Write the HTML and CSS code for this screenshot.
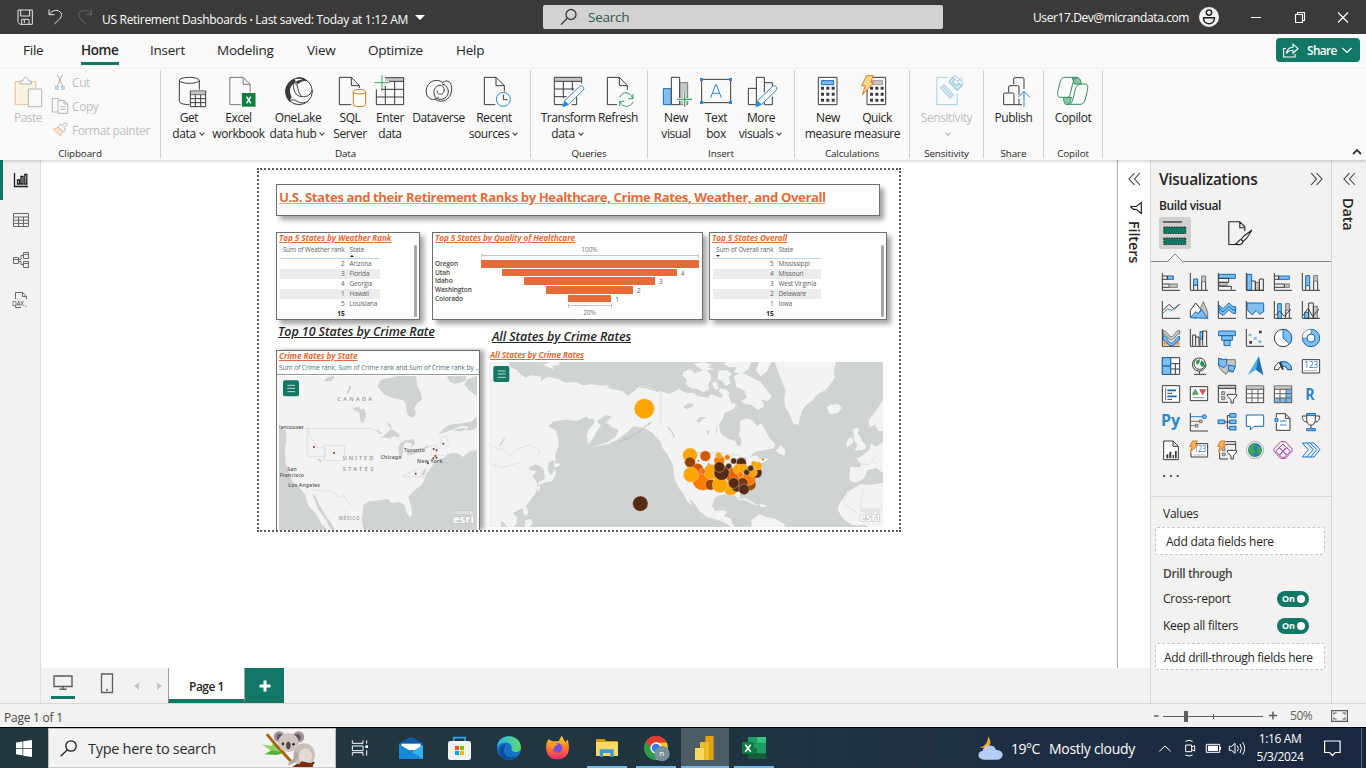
FILE: index.html
```html
<!DOCTYPE html>
<html lang="en">
<head>
<meta charset="utf-8">
<title>US Retirement Dashboards</title>
<link rel="stylesheet" href="styles.css">
</head>
<body>
<header class="titlebar">
  <svg class="tb-icons" viewBox="48 24 240 60"><g class="ln" stroke="#e8e6e4"><path d="M54 33h43v43H60l-6-6zM62 33v18h27V33M65 76V61h22v15M73 62v10"/></g><path class="ln" stroke="#e8e6e4" d="M147 31v16h16M148 46c8-14 28-16 35-4 6 11-4 18-20 33"/><path class="ln" stroke="#6b6967" d="M274 31v16h-16M273 46c-8-14-28-16-35-4-6 11 4 18 20 33"/></svg>
  <div class="doc-name">US Retirement Dashboards <small>•</small> Last saved: Today at 1:12 AM</div>
  <i class="doc-caret"></i>
  <div class="search"><svg width="18" height="18" viewBox="0 0 18 18" fill="none" stroke="#3b3a39" stroke-width="1.3"><circle cx="11" cy="6.5" r="5"/><path d="M7.3 10.3L1 16.6"/></svg><span>Search</span></div>
  <div class="account">User17.Dev@micrandata.com</div>
  <svg class="avatar" viewBox="0 0 20 20"><circle cx="10" cy="10" r="10" fill="#f3f2f1"/><g fill="none" stroke="#1b1a19" stroke-width="1.4"><circle cx="10" cy="5.6" r="2.7"/><path d="M4.5 10.7h11c0 8-11 8-11 0z"/></g></svg>
  <svg class="winbtns" viewBox="0 0 100 20" fill="none" stroke="#fff" stroke-width="1.1"><path d="M0 10.500h10M87 5.500l10 10M97 5.500l-10 10M44.500 7.500h7v8h-7zM46.500 7v-1.500h7v8H52"/></svg>
</header>

<nav class="menu">
  <div class="tabs"><span>File</span><span class="on">Home</span><span>Insert</span><span>Modeling</span><span>View</span><span>Optimize</span><span>Help</span></div>
  <button class="share"><svg width="16" height="15" viewBox="0 0 16 15" fill="none" stroke="#fff" stroke-width="1.1"><path d="M3 5.500H.6v8.500h11.500v-3M3.500 10.500C4 6.500 6 4.500 10 4.300V1.200l5 4.500-5 4.500V7.300c-3 0-5 .8-6.500 3.200z"/></svg><span>Share</span><svg width="10" height="7" viewBox="0 0 10 7" fill="none" stroke="#fff" stroke-width="1.2"><path d="M.5 1l4.500 4.500L9.500 1"/></svg></button>
</nav>

<section class="ribbon">
  <div class="group g-clip">
    <div class="clip-row">
      <div class="paste"><svg viewBox="42 228 96 96"><path d="M52 245h61v20M52 245v68h38" fill="none" stroke="#f0c9a0" stroke-width="4"/><path d="M56 249h53v18H90v42H56z" fill="#faf3e0"/><path class="ln" fill="#fafafa" stroke="#b5b3b1" d="M66 252v-9h8c1-14 17-14 18 0h8v9zM91 267h40v53H91z"/></svg><span>Paste</span></div>
      <div class="clip-list">
        <div><svg viewBox="156 222 48 48"><path class="ln" stroke="#b5b3b1" d="M172 224l15 34M187 224l-15 34"/><path class="ln" stroke="#9ac6e4" fill="#d6e9f6" d="M166 259h8v9h-8zM185 259h8v9h-8z"/></svg>Cut</div>
        <div><svg viewBox="156 294 48 48"><path class="ln" stroke="#b5b3b1" d="M172 336h-15v-40h20l6 6M174 302h18l11 10v28h-29zM192 302v10h11M181 320h15M181 328h15"/></svg>Copy</div>
        <div><svg viewBox="156 366 48 48"><path class="ln" stroke="#edc7a2" fill="#f8e3cd" d="M158 388l23 20 8-14-12-13z"/><path class="ln" stroke="#b5b3b1" fill="#fafafa" d="M174 380l16 16 7-7-6-6 11-10-5-5-12 9-5-4z"/></svg>Format painter</div>
      </div>
    </div>
    <div class="glabel">Clipboard</div>
  </div>

  <div class="group g-data">
    <div class="btns">
      <div class="rb"><svg viewBox="516 228 96 96"><g class="dk"><ellipse cx="565" cy="241" rx="30" ry="9"/><path d="M535 241v63c0 6 14 10 30 10M595 241v28"/></g><path fill="#fff" class="dk" d="M568 273h46v47h-46zM568 284h46M568 296h46M568 308h46M583 284v36M599 284v36"/><path fill="#c8c6c4" d="M570 275h42v8h-42z"/></svg><span>Get<br>data<i class="cv"></i></span></div>
      <div class="rb"><svg viewBox="664.500 228 96 96"><path class="ln" stroke="#797775" d="M718 314h-33v-82h40l21 21v24M725 232v21h21"/><path fill="#107c41" d="M721 279h41v41h-41z"/><path d="M735 290l13 20M748 290l-13 20" stroke="#fff" stroke-width="4"/></svg><span>Excel<br>workbook</span></div>
      <div class="rb"><svg viewBox="843 228 96 96"><circle class="dk" cx="894" cy="274" r="40"/><path fill="#3b3a39" d="M880 236c15-9 33-4 40 8-14-4-24 3-31 10M878 237c-28 14-33 45-13 68l7-14c-10-18-4-37 10-42 3-8 20-11 24-7-8-8-20-10-28-5z"/><path class="dk" d="M878 246c-4 22 5 43 24 44 18 2 29-8 31-20M866 304c18-16 24 14 50 2M878 246c17 11 9 27 24 44"/></svg><span>OneLake<br>data hub<i class="cv"></i></span></div>
      <div class="rb"><svg viewBox="999 228 96 96"><path class="dk" d="M1051 314h-36v-82h36l24 25v7M1051 232v25h24"/><g class="ln" stroke="#d8751d" fill="#fff"><path d="M1057 275v38c0 9 37 9 37 0v-38"/><ellipse cx="1075.500" cy="275" rx="18.500" ry="7"/></g></svg><span>SQL<br>Server</span></div>
      <div class="rb"><svg viewBox="1119 228 96 96"><path fill="#c8c6c4" d="M1152 234h56v10h-56z"/><path class="dk" d="M1152 233h56v81h-82v-46M1164 244h44M1140 268h68M1126 291h82M1153 258v56M1181 244v70"/><path class="ln" stroke="#37a660" d="M1143 226v46M1120 248h46"/></svg><span>Enter<br>data</span></div>
      <div class="rb"><svg viewBox="-25.500 228 96 96"><path class="dk" d="M33 247c-20-14-46-2-49 24-2 24 22 36 38 20M10 298c22 14 47 0 50-25 2-18-4-30-15-30-4 0-8 2-12 4M32 252c18 5 24 24 13 38-12 14-38 10-38-12 0-26 30-30 31-8 0 16-22 18-21 2"/></svg><span>Dataverse</span></div>
      <div class="rb"><svg viewBox="141 228 96 96"><path class="dk" d="M193 314h-33v-82h35l25 25v17M195 232v25h25"/><circle cx="217" cy="298" r="21" class="ln" fill="#fff" stroke="#2b88d8"/><path class="dk" d="M217 284v15h12"/></svg><span>Recent<br>sources<i class="cv"></i></span></div>
    </div>
    <div class="glabel">Data</div>
  </div>

  <div class="group g-query">
    <div class="btns">
      <div class="rb"><svg viewBox="363 228 96 96"><path fill="#c8c6c4" d="M370 233h82v10h-82z"/><path class="dk" d="M452 250v-18h-82v82h26M370 244h82M370 267h60M370 290h37M397 244v50M424 244v28M437 291v23h-15"/><path class="pen" d="M401 302l45-43c8-4 16 3 11 11l-44 43-17 7z"/><path fill="#2b88d8" d="M401 302l12 11-17 8z"/></svg><span>Transform<br>data<i class="cv"></i></span></div>
      <div class="rb"><svg viewBox="513 228 96 96"><path class="dk" d="M558 314h-29v-82h36l24 25v12M565 232v25h24"/><path class="ln" stroke="#3d9a5f" d="M606 282v14h-14M566 318v-14h14M566 292c7-19 32-19 39 3M606 306c-7 17-32 18-39-1"/></svg><span>Refresh</span></div>
    </div>
    <div class="glabel">Queries</div>
  </div>

  <div class="group g-insert">
    <div class="btns">
      <div class="rb"><svg viewBox="690 228 96 96"><path class="bl" d="M700 266h24v48h-24z"/><path fill="#c8c6c4" stroke="#797775" stroke-width="3" d="M749 248h24v66h-24z"/><path class="dk" fill="#fff" d="M724 232h25v82h-25z"/><path d="M764 274v47M741 298h45" stroke="#fafafa" stroke-width="8"/><path d="M764 274v47M741 298h45" stroke="#37a660" stroke-width="3.500"/></svg><span>New<br>visual</span></div>
      <div class="rb"><svg viewBox="810 228 96 96"><path class="dk" d="M815 238h87v70h-87z"/><path fill="#2b88d8" d="M810 234h9v9h-9zM897 234h9v9h-9zM810 303h9v9h-9zM897 303h9v9h-9z"/><path class="ln" stroke="#2b88d8" d="M842 293l15-39h2l15 39M847 280h22"/></svg><span>Text<br>box</span></div>
      <div class="rb"><svg viewBox="945 228 96 96"><path class="dk" d="M979 265h-24v49h24v-82h24v45M1003 248h24v11M1003 303v11h24v-24"/><path class="pen" d="M983 302l45-43c8-4 16 3 11 11l-44 43-17 7z"/><path fill="#2b88d8" d="M983 302l12 11-17 8z"/></svg><span>More<br>visuals<i class="cv"></i></span></div>
    </div>
    <div class="glabel">Insert</div>
  </div>

  <div class="group g-calc">
    <div class="btns">
      <div class="rb"><svg viewBox="1146 228 96 96"><path class="dk" fill="#fff" d="M1165 232h56v82h-56z"/><path class="bl" d="M1174 242h37v12h-37z"/><path stroke="#3b3a39" stroke-width="9" stroke-dasharray="9 7" d="M1173 265h41M1173 283h41M1173 301h41"/></svg><span>New<br>measure</span></div>
      <div class="rb"><svg viewBox="1293 228 96 96"><path class="dk" fill="#fff" d="M1311 232h56v82h-56z"/><path fill="#c8c6c4" stroke="#797775" stroke-width="2" d="M1325 242h33v12h-33z"/><path stroke="#3b3a39" stroke-width="9" stroke-dasharray="9 7" d="M1320 265h41M1320 283h41M1320 301h41"/><path class="ln" fill="#fbd98b" stroke="#e07b22" d="M1310 227h20l-8 20h9l-34 37 9-27h-11z"/></svg><span>Quick<br>measure</span></div>
    </div>
    <div class="glabel">Calculations</div>
  </div>

  <div class="group g-sens">
    <div class="btns">
      <div class="rb off"><svg viewBox="91.500 228 96 96"><g class="ln" stroke="#a3cde6"><path d="M143 232h-34v82h61v-34"/><path fill="#d5e8f5" d="M119 263l12-9 29 31-12 10zM128 261l24 26"/><path fill="#d5e8f5" stroke-width="4" d="M146 246l10-14 6 6-5 9 10 9 9-6 8 8-14 13z"/><path d="M156 232l8-5 24 22-4 9M164 238l8 7 8-11 8 7"/></g></svg><span>Sensitivity<br><i class="cv"></i></span></div>
    </div>
    <div class="glabel">Sensitivity</div>
  </div>
  <div class="group g-share">
    <div class="btns">
      <div class="rb"><svg viewBox="290 228 96 96"><path class="dk" d="M337 253v-16q0-4 4-4h23q4 0 4 4v30M322 277v-16q0-4 4-4h23q4 0 4 4v24M307 314v-31q0-4 4-4h23q4 0 4 4v31zM338 314h24M353 296v18"/><path class="ln" stroke="#2b88d8" d="M368 320v-45M350 292l18-18 18 18"/></svg><span>Publish</span></div>
    </div>
    <div class="glabel">Share</div>
  </div>
  <div class="group g-cop">
    <div class="btns">
      <div class="rb"><svg viewBox="471 228 96 96"><g class="ln" stroke="#2f8f5b"><path fill="#8cc5a2" d="M517 234h15c7 0 9 4 13 18h-22zM490 292h24l-3 12c-3 9-5 10-11 10-8-1-8-10-10-22z"/><path d="M490 292h-12c-7-3-6-12-3-24l6-24c3-9 7-12 16-12h37M545 252h13c7 3 6 12 3 24l-6 24c-3 9-7 13-16 13h-37M526 235c-6 5-8 18-12 32-4 17-4 25-12 25M511 312c7-6 8-16 12-32 4-18 6-27 22-28"/></g></svg><span>Copilot</span></div>
    </div>
    <div class="glabel">Copilot</div>
  </div>
  <svg class="collapse" width="10" height="7" viewBox="0 0 10 7" fill="none" stroke="#3b3a39" stroke-width="1.900"><path d="M1 6l4-4 4 4"/></svg>
</section>

<main class="work">
  <aside class="rail">
    <div class="on"><svg viewBox="0 0 18 18"><path class="r1" stroke="#1b1a19" stroke-width="1.300" d="M2.500 2v13.500H16M5.500 9h2v4h-2zM9 5.500h2V13H9zM12.800 3.500h2V13h-2z"/></svg></div>
    <div><svg viewBox="0 0 18 18"><path class="r1" d="M1.500 2.500h15v13h-15zM1.500 6h15M1.500 9.200h15M1.500 12.400h15M6.500 6v9.500M11.500 6v9.500"/></svg></div>
    <div><svg viewBox="0 0 18 18"><path class="r1" d="M1.500 6.500h5v6h-5zM1.500 8.500h5M11.500 1.500h5v6h-5zM11.500 3.500h5M11.500 10.500h5v6h-5zM11.500 12.500h5M6.500 8.500H9v-4h2.500M6.500 10.500H9v3h2.500"/></svg></div>
    <div><svg viewBox="0 0 18 18"><path class="r1" d="M3.500 8V1.500h7l4 4V8M10.500 1.500v4h4M3.500 15v1.500H9M13 14.500l1.500 1.500"/><text x="0" y="14.500" font-size="6.500" fill="#484644">DAX</text></svg></div>
  </aside>

  <div class="center">
    <div class="upper">
      <div class="stage">
        <div class="page">
          <div class="visual v-title">U.S. States and their Retirement Ranks by Healthcare, Crime Rates, Weather, and Overall</div>

          <div class="visual v-weather">
            <h3>Top 5 States by Weather Rank</h3>
            <div class="tbl"><div class="th"><span>Sum of Weather rank</span><span>State<i class="up"></i></span></div>
              <div><span>2</span><span>Arizona</span></div><div><span>3</span><span>Florida</span></div><div><span>4</span><span>Georgia</span></div><div><span>1</span><span>Hawaii</span></div><div><span>5</span><span>Louisiana</span></div><div class="sum"><span>15</span><span></span></div></div>
            <i class="scroll"></i>
          </div>

          <div class="visual v-health">
            <h3>Top 5 States by Quality of Healthcare</h3>
            <div class="funnel">
              <div class="cap">100%</div>
              <div class="scale" style="width:218px"></div>
              <div class="f"><b>Oregon</b><span><i style="width:100%"></i></span></div>
              <div class="f"><b>Utah</b><span><i style="width:80%"></i><em>4</em></span></div>
              <div class="f"><b>Idaho</b><span><i style="width:60%"></i><em>3</em></span></div>
              <div class="f"><b>Washington</b><span><i style="width:40%"></i><em>2</em></span></div>
              <div class="f"><b>Colorado</b><span><i style="width:20%"></i><em>1</em></span></div>
              <div class="scale low" style="width:44px"></div>
              <div class="cap">20%</div>
            </div>
          </div>

          <div class="visual v-overall">
            <h3>Top 5 States Overall</h3>
            <div class="tbl"><div class="th"><span>Sum of Overall rank<i class="down"></i></span><span>State</span></div>
              <div><span>5</span><span>Mississippi</span></div><div><span>4</span><span>Missouri</span></div><div><span>3</span><span>West Virginia</span></div><div><span>2</span><span>Delaware</span></div><div><span>1</span><span>Iowa</span></div><div class="sum"><span>15</span><span></span></div></div>
            <i class="scroll"></i>
          </div>

          <h2 class="h-top">Top 10 States by Crime Rate</h2>
          <h2 class="h-all">All States by Crime Rates</h2>

          <div class="visual v-crime">
            <h3>Crime Rates by State</h3>
            <p>Sum of Crime rank, Sum of Crime rank and Sum of Crime rank by ...</p>
            <svg class="map1" viewBox="72 168 594 462">
              <path fill="#f3f3f3" d="M72 168h594v462H72z"/>
              <g fill="#cfd3d4">
                <path d="M72 325l20 5 3 22-5 40 2 36 7 24 13 32 25 22 15 20 8 26 20 23 15 29 22 26H72z"/>
                <path fill="#f3f3f3" d="M148 516l20 3 12 30 22 40 20 25-2 14-18-12-20-36-20-20z"/>
                <path d="M172 522l9 5 12 28 20 32 16 22 10 21h-12l-14-30-24-32z"/>
                <path d="M326 630l-6-30 6-46 16-10 34-3 22-4 12 12 24-2 14 8 8 24 10 14 6-13-5-28-7-20 16-19 26-20 7-18 6-16 16-20 9-17 26-8 12-12 16-4 18 3 12 10 18-16 24-6v-8h10v273z"/>
                <path d="M425 168c-15 10-38 2-50 15l-8 16 20 24 32 13 26 4 8 14 2 22 6 13 14 4 8-12-5-16 10-18 14-8-5-22-11-20-3-29z"/>
                <path d="M576 168l8 18 14 5 18-2 18-10-2-11zM638 178l28-10v60l-26-18-12-18zM666 290l-18 15-26 5-40 4-18 14-14 16 34-12 34-14 22 2-6 12 24-4 8-8zM590 332l20-6 26-2-12 10zM206 184l12-12 20-4 2 4-14 12zM275 218l5-10 3-12 6 3-5 16-8 8zM292 264l22-3 4 10 8-6 8 18-8 25-9-3-4-28-6-2-10-5zM395 304l11 8 4 12-7-2zM362 330l12 3 8 8-8 2zM371 352l12-2 16-15 10-9 14 9 10 8-2 10-16-4-10 7-14-3zM432 398l-2-18 6-10 16-10 4 4-10 10-2 22-3 15-8 3zM447 364l12-4 16-3 5 12-6 10-7 3 5-11-10-2zM457 394l14-3 18-2 7 6-26 9-14 2zM486 388l22-6 16-8-4 8-16 9zM188 418l6-2 8 8-5 4z"/>
                <path d="M498 466l8-16 8-6-4 20z"/>
              </g>
              <g fill="none" stroke="#cfcfcf" stroke-width="1.500"><path d="M100 326h244l30 8M157 325v84h54M157 325l10 25 12 20 10 14h22v26M208 376h60v46h-60zM168 508l30 5 30-2 22 20 16-4 14 22 14 8M442 468l20-9 18-8 14-8 12 10M442 470h66M528 376h16v44M555 376l6-25 14-4 5 26-16 16M528 376v30h38"/></g>
              <g fill="#7a3d1a"><circle cx="177" cy="381" r="3"/><circle cx="237" cy="399" r="3"/><circle cx="482" cy="461" r="3"/><circle cx="536" cy="387" r="3"/><circle cx="545" cy="391" r="3"/><circle cx="565" cy="371" r="3"/><circle cx="541" cy="408" r="3"/><circle cx="535" cy="415" r="3"/><circle cx="545" cy="413" r="3"/><circle cx="519" cy="430" r="3"/></g>
              <g class="lb"><g fill="#8d8f90"><text x="247" y="244" font-size="17" textLength="104">CANADA</text><text x="263" y="421" font-size="17" textLength="92">UNITED</text><text x="263" y="452" font-size="17" textLength="92">STATES</text><text x="251" y="600" font-size="13" textLength="62">MÉXICO</text></g>
              <g fill="#484848"><text x="66" y="326" font-size="15.500" textLength="80">Vancouver</text><text x="377" y="416" font-size="15.500" textLength="62">Chicago</text><text x="447" y="396" font-size="15.500" textLength="63">Toronto</text><text x="486" y="429" font-size="15.500" textLength="76">New York</text><text x="97" y="452" font-size="15.500" textLength="28">San</text><text x="74" y="471" font-size="15.500" textLength="73">Francisco</text><text x="100" y="500" font-size="15.500" textLength="94">Los Angeles</text></g></g>
              <g class="esri"><text class="pw" x="596" y="582" font-size="8" textLength="60">POWERED BY</text><text x="593" y="608" font-size="30" textLength="64" lengthAdjust="spacingAndGlyphs">esri</text></g>
              <rect x="84" y="181" width="48" height="48" rx="6" fill="#117865"/><path d="M97 196h23M97 205h23M97 215h23" stroke="#fff" stroke-width="2.200"/>
            </svg>
          </div>

          <div class="visual v-all">
            <h3>All States by Crime Rates</h3>
            <svg class="map2" viewBox="27 66 1182 495">
              <path fill="#cfd3d4" d="M27 66h1182v495H27z"/>
              <g fill="#f3f3f3">
                <path d="M27 66h60l3 15 20 8 12 14 14 10 20-7 28 4-3 14 22-14 30 6 24 12 34-2 16 10 26-3 38 4 20 9 34 7 36 26 16 18-12 10-26-4-26 3-4 20-18 3-12-4-14 8-14 10 12 14-16 22-9 18-13 14-5-25 8-20 14-16 2-12-18-1-6-8-30 14-32-4-38 5-14 15 22 13 7 25 1 22-10 25-10 19-10 6-2 20 8 18-9 13-9-5-2-25-7-10-18-7-22 10 8 8 18 3-14 14 15 22-3 25-14 20-16 23-24 13-16 8 12 13-2 20-20 20-14-22-12-6v25H27z"/>
                <path d="M213 302l8 12 3 30 4 18-8 2-8-34zM222 366l12 6 8-2-7 10-12 2zM225 384l3 18-10 20-28 6-12 8-6-6 22-14 22-12zM174 436l6 5-4 14-5-9zM126 468l6 2-4 20-6-6zM128 502l12-2 4 16-4 12-10-8zM136 540l18-4 4 16-12 9h-12zM53 498l9-4 4 8-8 6zM190 74l20-8h30l-4 10-20 2 6 10-12-4zM370 137l12-3 6 5-10 3z"/>
                <path d="M430 188l14-20 22-18 14-14 34 8 28 10 26 8 28-14 25 12 18-2 14 10 30 5 12-10 28 11 10-14 14 8 6 20 16 6-10 14-24 10-8 20-10 16 6 28 22 14 22 8 4 14 12-2 2-16-9-16 5-18-1-22 20-9 18 8 14 16 12-10 12 22 12 22 18 20-4 12-24 4-32 6-18 16 22-5 8 10 14-1 16 2-26 14-10-4-12 12-2 15-6 11-10 24-14 22-10 14 4 20-10-12-12-10-40 2-16 10-8 22 10 16 22-2 12 4-8 14 20 6 6 20 14 12 24-2-12 8-20-4-24-18-28-12-30-8-24-18-14-22-15-16 5 20-12-10-8-18-18-24-14-30-2-34-16-34-16-20-8-22-22-24-24-14-34-6-18 18-24 18-30 16-34 8-26 4 50-14 28-18 10-22-22-8-14-14 14-16-12-8 12-8z"/>
                <path d="M610 96l20-8 14 12 30-10 18 12 2 16-10 14 4 16-18 8-22-10-18-2-14-14 6-10-14-12zM640 72l30-6 25 8-12 8 20 4-30 8-14-10zM730 70l10-4h74l-8 22-24 14-20-6 8-14-26-2zM716 92l24-2 14 12-8 10 6 18-14 8-12-16-14-4zM762 108l24-10 28 14 28 14 18 24 16 20-12 14-20-6 10 20-20 12-20-16-18-2-14-8 18-10-6-22-24-10zM695 128l14-2 8 20-12 4zM836 66h38l-14 30-18 12-14-16zM720 145l18 3 12 14-20 3-14-10z"/>
                <path d="M884 66h184l-7 26 4 20-12 18-16 20-24 12-14 18-20 14-14 20-10 41-16-5-14-36-10-14-2-28 4-20-14-34z"/>
                <path d="M1040 202l12-8 22-2 12 12-14 15-22 4zM888 332l14-17 14 16-2 18-14-7zM776 478l20-4 24 14 18 9-18-3-22-12zM838 492l18 2 4 8-20-2zM815 540l23-17 22 8 26 6 26 14 3 10H814zM1120 268l16-6-2 18 12 22 12 16-2 10-32 6 8-18-10-16zM1106 296l10-6 4 16-18 16-4-10z"/>
                <path d="M1209 180l-13 20-17 24-14 16 4 22 16-8 10 20 14-2v34l-22 14-14-10-4 18-26 22-14 6 14 16-2 10-30-2-3 24 2 18 18 6 22-12 14-26 24-6 21 15zM1209 428l-36 6-32-2-20 14-18 8-12 20-14 20-4 14 10 20 14 16 22 12h34l14 5h42z"/>
              </g>
              <path fill="none" stroke="#dadcdc" stroke-width="2" d="M542 154v96M27 316l40 12 24 20 22-22 38-12 30 20-12 20M27 370l40 12 60-16M608 337h110l60 10M1110 452l-20 36 40 30M1150 445l-10 50 20 30 49-20M1130 370l40 4 20-30"/>
              <g fill="#cfd3d4"><path d="M610 200l16-10 18 2-8 8-16 8zM648 242l12-12 20 2-14 8-10 8zM680 270l10 2-8 14zM762 358l20-8 20 4-8 10zM55 318l20-28 2 2-14 24zM707 255l5 20-4 6z"/></g>
              <path fill="none" stroke="#b5b9ba" stroke-width="4" stroke-dasharray="3 2" d="M470 138l30 6 38 10M515 246l-18 12-16 16-32 18-34 14M563 260l12 14 8 18"/>
              <g stroke="#e8e0d8" stroke-width="1.200">
                <g fill="#ff7a00"><circle cx="668" cy="420" r="31"/><circle cx="718" cy="362" r="16"/><circle cx="742" cy="352" r="8"/></g>
                <g fill="#9c4600"><circle cx="652" cy="388" r="18" fill="#d05800"/><circle cx="692" cy="434" r="16"/><circle cx="676" cy="348" r="16" fill="#d05800"/><circle cx="808" cy="432" r="20"/></g>
                <g fill="#ffa500"><circle cx="630" cy="346" r="22"/></g><circle cx="630" cy="367" r="16" fill="#944200"/>
                <g fill="#ffa500"><circle cx="633" cy="404" r="23"/><circle cx="694" cy="396" r="23"/><circle cx="716" cy="346" r="9"/><circle cx="752" cy="444" r="22"/><circle cx="720" cy="435" r="23"/></g>
                <circle cx="667" cy="394" r="9" fill="#f56a1c"/>
                <circle cx="764" cy="408" r="26" fill="#e66000"/><circle cx="807" cy="416" r="20" fill="#ff7a00"/>
                <g fill="#552b13"><circle cx="725" cy="398" r="23"/><circle cx="718" cy="381" r="16"/><circle cx="784" cy="368" r="15"/><circle cx="761" cy="363" r="9"/><circle cx="746" cy="379" r="9"/><circle cx="830" cy="398" r="16"/><circle cx="772" cy="438" r="18"/><circle cx="788" cy="429" r="16" fill="#743710"/><circle cx="761" cy="429" r="16"/><circle cx="792" cy="448" r="16"/></g>
                <g fill="#ffa500"><circle cx="775" cy="388" r="16"/><circle cx="790" cy="386" r="14"/><circle cx="834" cy="378" r="12"/><circle cx="822" cy="372" r="9"/><circle cx="819" cy="398" r="13"/></g>
                <circle cx="800" cy="397" r="9" fill="#552b13"/><circle cx="812" cy="385" r="9" fill="#552b13"/><circle cx="781" cy="404" r="9" fill="#ff7a00"/><circle cx="849" cy="358" r="3.500" fill="#d05800"/><circle cx="655" cy="363" r="3" fill="#d05800"/><circle cx="686" cy="372" r="2.500" fill="#552b13"/>
                <circle cx="493" cy="206" r="30" fill="#ffa500"/><circle cx="481" cy="491" r="23" fill="#552b13"/>
              </g>
              <g class="esri"><text class="pw" x="1140" y="517" font-size="8" textLength="58">POWERED BY</text><text x="1138" y="543" font-size="30" textLength="62" lengthAdjust="spacingAndGlyphs">esri</text></g>
              <rect x="40" y="78" width="48" height="48" rx="6" fill="#117865"/><path d="M53 93h24M53 102h24M53 112h24" stroke="#fff" stroke-width="2.200"/>
            </svg>
          </div>
        </div>
      </div>
      <aside class="filters">
        <svg width="13" height="14" viewBox="0 0 13 14" class="chev"><path d="M6.500 1L1 7l5.500 6M12 1L6.500 7 12 13"/></svg>
        <svg width="12" height="12" viewBox="0 0 12 12" class="fun"><path d="M11.300 .5v11L6.300 7.300H3.500L.8 5V4.500h5.500z"/></svg>
        <span>Filters</span>
      </aside>
    </div>
    <div class="pagetabs">
      <div class="dev on"><svg width="20" height="16" viewBox="0 0 20 16" fill="none" stroke="#605e5c" stroke-width="1.400"><path d="M1 1h18v10.500H1zM10 11.500V14M6.500 14.300h7"/></svg></div>
      <div class="dev ph"><svg width="14" height="21" viewBox="0 0 14 21" fill="none" stroke="#605e5c" stroke-width="1.300"><path d="M1.500 1h11v18.500h-11zM6 17h2"/></svg></div>
      <i class="pl"></i><i class="pr"></i>
      <div class="ptab">Page 1</div>
      <div class="padd"><svg width="12" height="12" viewBox="0 0 12 12"><path d="M6 .5v11M.5 6h11" stroke="#fff" stroke-width="3"/></svg></div>
    </div>
  </div>

  <aside class="viz">
    <div class="vhead"><h1>Visualizations</h1><svg width="13" height="14" viewBox="0 0 13 14" class="chev"><path d="M1 1l5.500 6L1 13M6.500 1L12 7l-5.500 6"/></svg></div>
    <div class="vsub">Build visual</div>
    <div class="vtabs">
      <div class="vt on"><svg width="24" height="25" viewBox="0 0 24 25"><path d="M0 1h19" stroke="#252423" stroke-width="1.200"/><g fill="#117865" stroke="#252423" stroke-width="1" stroke-dasharray="1.500 1"><path d="M.8 6h22v6.500h-22zM.8 17h22v6.500h-22z"/></g></svg></div>
      <div class="vt"><svg width="25" height="25" viewBox="0 0 25 25" fill="none" stroke="#252423" stroke-width="1.100"><path d="M8 23.500H.8V.8h11l5 5V10M11.800.8v6h5M24 9l-8 6-3 3.500 2 2 3.500-3zM13 18.500c-3 0-2 4-6 4.500 3 1 8 1 8-2.500"/></svg></div>
    </div>
    <svg class="vline" viewBox="0 0 180 9"><path d="M0 8.500h16.500l7.500-7.500 7.500 7.500H180" fill="none" stroke="#8a8886" stroke-width="1"/></svg>
    <div class="icons">
      <svg viewBox="0 0 54 54"><path class="bl" d="M16 9h18v10H16z"/><path class="dk" d="M1 0v52h53M2 9h14v10H2M2 33h20v10H2"/><path class="gy" d="M22 33h24v10H22z"/></svg>
      <svg viewBox="0 0 54 54"><path class="dk" d="M1 0v52h53M11 36h12v16M11 52V36M35 26v26M47 26v26"/><path class="bl" d="M11 18h12v18H11z"/><path class="gy" d="M35 9h12v17H35z"/></svg>
      <svg viewBox="0 0 54 54"><path class="bl" d="M2 4h50v12H2z"/><path class="gy" d="M3 28h24v10H3z"/><path class="dk" d="M1 0v52h53M2 16h30v12H2M2 40h38v10"/></svg>
      <svg viewBox="0 0 54 54"><path class="bl" d="M3 4h14v48H3z"/><path class="gy" d="M28 28h12v24H28z"/><path class="dk" d="M1 0v52h53M17 24h11v28M40 18h12v34H40z"/></svg>
      <svg viewBox="0 0 54 54"><path class="bl" d="M14 9h32v10H14z"/><path class="gy" d="M31 33h15v10H31z"/><path class="dk" d="M1 0v52h53M2 9h12v10H2M2 33h29v10H2"/></svg>
      <svg viewBox="0 0 54 54"><path class="dk" d="M1 0v52h53M11 38v14M23 38v14M35 24v28M47 24v28"/><path class="bl" d="M11 8h12v30H11z"/><path class="gy" d="M35 8h12v16H35z"/></svg>

      <svg viewBox="0 0 54 54"><path class="dk" d="M1 0v52h53M3 28l18-18 16 15 16-16"/><path class="ln" stroke="#2b88d8" d="M3 36l14-12 12 4 20-16"/></svg>
      <svg viewBox="0 0 54 54"><path class="gy" d="M24 40L40 2l13 32v18z"/><path class="dk" fill="#fff" d="M1 28L17 6l16 20-16 26L1 46z"/><path class="bl" d="M1 50l16-18 8 6 10-12 18 26z"/></svg>
      <svg viewBox="0 0 54 54"><path class="bl" d="M3 12l12 11L33 6l12 11h8v20h-9L33 26 15 44 3 34z"/><path class="ln" stroke="#0f6cbd" d="M3 22l12 11 18-17 12 11h8"/><path class="dk" d="M1 0v52h53"/></svg>
      <svg viewBox="0 0 54 54"><path class="bl" d="M3 6h50v26l-12 8-10-12-12 14L3 26z"/><path class="dk" d="M1 0v52h53"/></svg>
      <svg viewBox="0 0 54 54"><path class="bl" d="M11 8h11v44H11z"/><path class="gy" d="M35 8h11v20H35z"/><path class="dk" d="M1 0v52h53M35 28v24M46 28v24M3 44l14-14 14 16 20-22"/></svg>
      <svg viewBox="0 0 54 54"><path class="bl" d="M8 34h12v18H8z"/><path class="gy" d="M34 16h12v36H34z"/><path class="dk" d="M1 0v52h53M20 6h14v46H20zM3 44l15-22 14 24 19-22"/></svg>

      <svg viewBox="0 0 54 54"><path fill="#ef9b3d" d="M4 33h14v14H4zM36 33h16v14H36z"/><path class="gy" d="M3 5c16 0 14 18 25 18S36 5 53 5v10c-14 0-14 18-25 18S18 16 3 16z"/><path class="bl" d="M3 20c14 0 14 22 25 22s13-20 25-20v10c-10 0-12 18-25 18S14 32 3 32z"/><path class="dk" d="M1 0v52h53"/></svg>
      <svg viewBox="0 0 54 54"><path class="bl" d="M30 8h8v22h-8z"/><path class="dk" d="M1 0v52h53M8 50V18h9v32M17 24h10v26M38 50V6h12v44M30 30v20"/></svg>
      <svg viewBox="0 0 54 54"><path class="bl" d="M2 6h50v14H2zM11 20h32v14H11zM18 34h18v16H18z"/></svg>
      <svg viewBox="0 0 54 54"><path class="dk" d="M1 0v52h53"/><path fill="#3b3a39" d="M39 5h8v8h-8zM10 36h8v8h-8z"/><path fill="#7db8ea" d="M8 14h8v8H8zM24 24h8v8h-8zM38 34h8v8h-8z"/></svg>
      <svg viewBox="0 0 54 54"><circle class="dk" cx="27" cy="27" r="26" fill="#fff"/><path class="bl" d="M27 1v26l20 18C60 28 52 2 27 1z"/></svg>
      <svg viewBox="0 0 54 54"><circle class="bl" cx="27" cy="27" r="26"/><path fill="#fff" stroke="#797775" stroke-width="2" d="M27 1C8 1 0 16 1 27h14c0-8 6-12 12-12z"/><circle cx="27" cy="27" r="12" class="ln" fill="#fff" stroke="#0f6cbd"/></svg>

      <svg viewBox="0 0 54 54"><path class="dk" fill="#fff" d="M1 2h52v50H1zM26 20h27M26 2v50M40 20v32M26 36h14M40 36h13"/><path class="bl" d="M1 2h25v25H1zM1 27h25v25H1z"/></svg>
      <svg viewBox="0 0 54 54"><path class="dk" d="M18 4C2 14 4 38 24 42c14 2 24-8 24-20M28 43v9M12 52h36"/><circle class="dk" cx="29" cy="20" r="17" fill="#fff"/><path fill="#2a8c4a" d="M18 12l12-6-2 12-8 6zM34 10l8 6 2 10-8 4-6-8z"/></svg>
      <svg viewBox="0 0 54 54"><path class="gy" d="M2 4l14 4h36v18l-8 20-14-4-6 10-14-12L2 28z"/><path class="bl" d="M2 4l14 4 10-2v16l-8 10L2 24zM30 24l22 4-6 16-14-4z"/></svg>
      <svg viewBox="0 0 54 54"><path fill="#4db1dc" d="M38-2L5 54l25-16 22 16z"/><path fill="#1f6fb0" d="M38-2L30 38l22 16z"/></svg>
      <svg viewBox="0 0 54 54"><path class="dk" fill="#fff" d="M1 38C2 6 52 6 53 38H40c-1-14-25-14-26 0z"/><path class="bl" d="M20 16c16-6 32 4 33 22H40c-1-8-6-11-12-11z"/><path d="M27 38L17 16" stroke="#252423" stroke-width="5"/></svg>
      <svg viewBox="0 0 54 54"><path class="dk" fill="#fff" d="M1 8h52v40H1z"/><text class="num" x="7" y="34" textLength="41" lengthAdjust="spacingAndGlyphs">123</text><path d="M7 41h40" stroke="#999" stroke-width="2"/></svg>

      <svg viewBox="0 0 54 54"><path class="dk" fill="#fff" d="M1 2h52v50H1z"/><path d="M11 8v38" stroke="#797775" stroke-width="3"/><path stroke="#0f6cbd" stroke-width="5" d="M16 16h26M16 34h28"/><path stroke="#3b3a39" stroke-width="3" d="M16 25h14M16 43h14"/></svg>
      <svg viewBox="0 0 54 54"><path class="dk" fill="#fff" d="M1 5h52v42H1z"/><path fill="#5aac6f" stroke="#2a8c4a" stroke-width="2" d="M7 28l9-15 9 15z"/><path fill="#e55" stroke="#c33" stroke-width="2" d="M29 14h18l-9 15z"/><path d="M10 38h34" stroke="#797775" stroke-width="2.500"/></svg>
      <svg viewBox="0 0 54 54"><path fill="#c8c6c4" d="M2 2h50v8H2z"/><path class="dk" d="M30 52H1V1h52v24M1 10h52"/><path class="gy" d="M11 20h9v9h-9zM11 35h9v9h-9z"/><path class="dk" fill="#fff" d="M28 28h28v5L46 44v10h-7V44L28 33z"/></svg>
      <svg viewBox="0 0 54 54"><path class="dk" fill="#fff" d="M1 3h52v50H1z"/><path fill="#c8c6c4" d="M2 4h50v8H2z"/><path class="ln" stroke="#605e5c" d="M1 13h52M1 26h52M1 39h52M18 13v40M36 13v40"/></svg>
      <svg viewBox="0 0 54 54"><path class="dk" fill="#fff" d="M1 3h52v50H1z"/><path fill="#7db8ea" d="M36 13h16v39H2V39h34z"/><path fill="#c8c6c4" d="M2 4h50v8H2z"/><path class="ln" stroke="#605e5c" d="M1 13h52M1 26h52M1 39h52M18 13v40M36 13v40"/></svg>
      <svg viewBox="0 0 54 54"><text class="ltr" x="10" y="44" textLength="28" lengthAdjust="spacingAndGlyphs">R</text></svg>

      <svg viewBox="0 0 54 54"><text class="ltr" x="-3" y="40" textLength="57" lengthAdjust="spacingAndGlyphs">Py</text></svg>
      <svg viewBox="0 0 54 54"><path class="dk" d="M1 0v54h53"/><path class="ln" stroke="#2b88d8" d="M3 11h36"/><path class="ln" stroke="#797775" d="M3 25h26M3 38h14"/><circle class="bl" cx="43" cy="11" r="6"/><path class="gy" d="M28 21h8v8h-8zM16 34h8v8h-8z"/></svg>
      <svg viewBox="0 0 54 54"><path class="dk" d="M20 27h16M28 8v38M28 8h8M28 46h8"/><path class="bl" d="M0 21h20v11H0zM35 2h19v11H35zM35 21h19v11H35zM35 40h19v11H35z"/></svg>
      <svg viewBox="0 0 54 54"><path class="ln" stroke="#0f6cbd" fill="#fff" d="M1 6h52v34H24L13 51V40H1z"/></svg>
      <svg viewBox="0 0 54 54"><path class="dk" fill="#fff" d="M7 14V2h27l14 14v36H7V30M34 2v14h14"/><path class="bl" d="M3 17h9v9H3z"/><path class="ln" stroke="#2b88d8" d="M18 24h20M18 36h20"/></svg>
      <svg viewBox="0 0 54 54"><path class="dk" fill="#fff" d="M14 2h26v18c0 22-26 22-26 0zM14 9H1c0 12 5 18 14 18M40 9h13c0 12-5 18-14 18M27 37v10"/><path class="bl" d="M14 2h26v6H14zM14 47h26v6H14z"/></svg>

      <svg viewBox="0 0 54 54"><path class="dk" fill="#fff" d="M5 0h28l16 16v40H5zM33 0v16h16"/><path fill="#3b3a39" d="M13 40h6v12h-6zM22 32h6v20h-6zM32 42h4v10h-4zM39 30h5v22h-5z"/></svg>
      <svg viewBox="0 0 54 54"><path class="dk" fill="#fff" d="M14 8h39v40H3V34"/><text class="num" x="12" y="34" textLength="36" lengthAdjust="spacingAndGlyphs">123</text><path d="M10 42h36" stroke="#999" stroke-width="2"/><path class="ln" fill="#fbb563" stroke="#d8751d" d="M8 0h14l-6 12h8L1 33l6-17H-1z"/></svg>
      <svg viewBox="0 0 54 54"><path class="dk" d="M24 2h29v24M22 10h31M5 34v20h25"/><path class="gy" d="M13 20h8v9h-8zM13 36h8v8h-8z"/><path class="dk" fill="#fff" d="M28 28h28v5L46 44v10h-7V44L28 33z"/><path class="ln" fill="#fbb563" stroke="#d8751d" d="M8 0h14l-6 12h8L1 33l6-17H-1z"/></svg>
      <svg viewBox="0 0 54 54"><circle cx="27" cy="27" r="26" fill="#eee" stroke="#b9b7b5" stroke-width="3"/><circle cx="27" cy="27" r="21" fill="#2a7fae"/><path fill="#3da852" d="M8 22l14-14 8 4-8 10 6 10-8 12-10-8zM34 14l10 6 2 14-8 8-6-14z"/></svg>
      <svg viewBox="0 0 54 54"><g class="ln" stroke="#a040a8"><path d="M20 2h14l20 21v8L34 52H20L0 31v-8zM16 20L27 9l11 11-11 11zM5 30l11-10 11 11-11 11zM27 31l11-11 11 11-11 11zM16 42l11-11 11 11-11 10z"/></g></svg>
      <svg viewBox="0 0 54 54"><g class="ln" stroke="#0f7be0"><path d="M1 6h35l18 20-18 22H1l18-22zM14 6l20 20-20 22M24 6l20 20M26 48l18-22"/></g></svg>
    </div>
    <div class="more">...</div>
    <div class="wells">
      <div class="lab">Values</div>
      <div class="well">Add data fields here</div>
      <div class="lab drill">Drill through</div>
      <div class="tog"><span>Cross-report</span><em>On<i></i></em></div>
      <div class="tog"><span>Keep all filters</span><em>On<i></i></em></div>
      <div class="well w2">Add drill-through fields here</div>
    </div>
  </aside>
  <aside class="datap">
    <svg width="13" height="14" viewBox="0 0 13 14" class="chev"><path d="M6.500 1L1 7l5.500 6M12 1L6.500 7 12 13"/></svg>
    <span>Data</span>
  </aside>
</main>

<footer class="status">
  <span class="pg">Page 1 of 1</span>
  <svg class="zoombar" viewBox="0 0 124 14"><path d="M0 7h4.500M115 6.500h8M119 2.500v8" stroke="#605e5c" stroke-width="1.500"/><path d="M9 7.500h100M59.500 5v5" stroke="#605e5c" stroke-width="1"/><path fill="#605e5c" d="M30 2h4v11h-4z"/></svg>
  <span class="pct">50%</span>
  <svg width="17" height="12" viewBox="0 0 17 12" fill="none" stroke="#605e5c" stroke-width="1.200"><path d="M.6.600h15.800v10.800H.6z"/><path d="M3 4.500V3h2.500M11.500 3H14v1.500M14 7.500V9h-2.500M5.500 9H3V7.500"/></svg>
</footer>

<footer class="taskbar">
  <div class="start"><svg width="16" height="17" viewBox="0 0 16 17" fill="#fff"><path d="M0 2.500l6.500-1v6.500H0zM7.200 1.300L16 0v8H7.200zM0 8.800h6.500v6.500l-6.500-1zM7.200 8.800H16V17l-8.800-1.300z"/></svg></div>
  <div class="tsearch"><svg width="17" height="17" viewBox="0 0 17 17" fill="none" stroke="#1b1a19" stroke-width="1.300"><circle cx="11" cy="6" r="5.200"/><path d="M7.300 9.900L.7 16.300"/></svg><span>Type here to search</span>
    <svg class="koala" viewBox="780 204 180 120">
      <path fill="#8ed264" d="M785 252l30 6 5-10 12 8 28 22-22 6-40-2 14-10z"/><path fill="#5aae3c" d="M792 284l24-12 38 6-22 8z"/>
      <path d="M800 220l30 36 50 54" stroke="#a2670c" stroke-width="9" fill="none"/>
      <path fill="#7a2c0c" d="M880 324l30-20 42 4-10 16z"/>
      <ellipse cx="918" cy="285" rx="34" ry="36" fill="#cbbfba"/><ellipse cx="922" cy="290" rx="21" ry="25" fill="#e2dad5"/>
      <path fill="#b5a9a6" d="M888 272l14 12-10 24-26 12 6-14 12-8z"/>
      <path fill="#7a2c0c" d="M894 324l16-18 30 6 6 12z"/>
      <circle cx="839" cy="228" r="17" fill="#a29592"/><circle cx="900" cy="229" r="18" fill="#a29592"/><circle cx="841" cy="230" r="10" fill="#65516a"/><circle cx="896" cy="231" r="11" fill="#65516a"/>
      <ellipse cx="868" cy="247" rx="33" ry="30" fill="#cfc4bf"/><ellipse cx="868" cy="256" rx="7" ry="12" fill="#51434b"/><circle cx="851" cy="251" r="4" fill="#222"/><circle cx="884" cy="252" r="4" fill="#222"/>
    </svg>
  </div>
  <div class="apps">
    <svg viewBox="0 0 144 120" class="tv"><path fill="none" stroke="#fff" stroke-width="3" d="M49 37v9h32v-9M49 83v-9h32v9M49 54h32v14H49zM92 37v10M92 67v16"/><path fill="#fff" d="M88 52h8v8h-8z"/></svg>
    <svg viewBox="21 114 144 120"><path fill="#0f5ba8" d="M57 160l36-20 36 20v20H57z"/><path fill="#fff" d="M64 161h58v20H64z"/><path fill="#35b2ee" d="M57 163l38 22 34-20v42H57z"/><path fill="#1689dc" d="M57 163v44h72z"/></svg>
    <svg viewBox="168 114 144 120"><path d="M221 158v-15h34v15" fill="none" stroke="#2aa8e8" stroke-width="5"/><rect x="204" y="153" width="69" height="57" rx="7" fill="#f2f2f2"/><path fill="#f25022" d="M225 168h12v12h-12z"/><path fill="#7fba00" d="M240 168h12v12h-12z"/><path fill="#00a4ef" d="M225 183h12v12h-12z"/><path fill="#ffb900" d="M240 183h12v12h-12z"/></svg>
    <svg viewBox="315 114 144 120"><defs><linearGradient id="eg" x1="0" x2="1"><stop offset="0" stop-color="#2bb4e8"/><stop offset="1" stop-color="#5fdc6a"/></linearGradient></defs><circle cx="387" cy="174" r="36" fill="#1272c8"/><path fill="url(#eg)" d="M351 172c2-45 71-45 72 2 0 16-32 16-28 0 2-18-28-24-44-2z"/><path fill="#0c4c94" d="M372 178c-2 26 24 30 42 18-14 20-56 18-56-12 0-12 10-22 18-20z"/></svg>
    <svg viewBox="462 114 144 120"><defs><linearGradient id="fg" x2="0" y2="1"><stop offset="0" stop-color="#ffd83a"/><stop offset=".5" stop-color="#ff7a22"/><stop offset="1" stop-color="#f0287c"/></linearGradient></defs><path fill="url(#fg)" d="M500 158l6-10 10 6 20 0 8-16c8 6 6 14 14 18l4-8c8 18 10 58-26 60-38 2-40-32-36-50z"/><circle cx="533" cy="174" r="14" fill="#7a4ad8"/><path fill="#ff9a2a" d="M508 160c8-6 20-2 26 4l-10 4-2 8c-8 0-14-8-14-16z"/></svg>
    <svg viewBox="609 114 144 120"><path fill="#d89a10" d="M648 147h25l6 6h33v14h-64z"/><path fill="#ffd965" d="M648 156h66v42h-66z"/><path fill="#3a96dd" d="M659 178h42v23h-10v-12h-22v12h-10z"/><path class="u" d="M621 228h120v6H621z"/></svg>
    <svg viewBox="756 114 144 120"><circle cx="828" cy="174" r="36" fill="#2a9c4c"/><path fill="#e23c30" d="M797 156c16-26 50-24 64 2h-33l-15 16z"/><path fill="#fbc52c" d="M828 158h33c8 28-8 52-33 52l16-26z"/><circle cx="828" cy="174" r="17" fill="#fff"/><circle cx="828" cy="174" r="13" fill="#3a7be8"/><circle cx="846" cy="191" r="23" fill="#75909a"/><text x="838" y="199" font-size="24" fill="#fff">n</text><path class="u" d="M768 228h120v6H768z"/></svg>
    <svg viewBox="903 114 144 120" class="act"><path fill="#e0a20e" d="M976 138h25v72h-25z"/><path fill="#eebb2a" d="M960 156h27v54h-27z"/><path fill="#f9dc5e" d="M945 174h27v36h-27z"/><path class="u" d="M903 228h144v6H903z"/></svg>
    <svg viewBox="1050 114 144 120"><path fill="#1f9d62" d="M1104 141h54v66h-54z"/><path fill="#33c481" d="M1131 141h27v17h-27z"/><path fill="#107c41" d="M1104 174h27v17h-27z"/><path fill="#185c37" d="M1104 190h54v17h-54z"/><path fill="#107c41" d="M1086 156h36v36h-36z"/><path d="M1096 164l16 21M1112 164l-16 21" stroke="#fff" stroke-width="5"/><path class="u" d="M1062 228h120v6h-120z"/></svg>
  </div>
  <div class="tray">
    <svg width="25" height="25" viewBox="82 136 75 75"><path fill="#f0a732" d="M112 138c16 16 6 40-26 32 16-2 26-14 26-32z"/><path fill="#b3cdf4" d="M98 207c-20-2-18-26-2-26 2-20 36-22 40-3 26-2 26 28 4 29z"/></svg>
    <span class="temp">19°C</span><span class="wx">Mostly cloudy</span>
    <svg class="sys" viewBox="624 144 264 60"><g fill="none" stroke="#fff" stroke-width="3"><path d="M628 184l17-16 17 16M707 165h18v20h-18zM725 171l9-4v16l-9-4M706 154q11-6 22 0M706 195q11 6 22 0M769 163h40v24h-40zM838 169h7l10-9v30l-10-9h-7zM862 167q6 8 0 17M870 162q9 13 0 27M878 157q12 18 0 37"/></g><path fill="#fff" d="M774 167h30v16h-30zM809 171h4v8h-4z"/></svg>
    <div class="clock">1:16 AM<br>5/3/2024</div>
    <svg width="17" height="17" viewBox="0 0 17 17" fill="none" stroke="#fff" stroke-width="1.200"><path d="M.6 1h15.500v11.500h-5l-2.700 3-2.700-3H.6z"/></svg>
    <i class="peek"></i>
  </div>
</footer>
</body>
</html>
```
FILE: styles.css
```css
* { box-sizing: border-box; }
body { margin: 0; width: 1366px; height: 768px; overflow: hidden; display: flex; flex-direction: column; font-family: "Open Sans", "Noto Sans", sans-serif; font-size: 12px; letter-spacing: -0.02em; color: #252423; background: #fff; }
svg { display: block; flex: none; overflow: visible; }
h1, h2, h3, p { margin: 0; }
i { font-style: normal; }
.ln { stroke-width: 3; }
.ln:not([fill]) { fill: none; }
.dk { stroke: #3b3a39; stroke-width: 3; }
.dk:not([fill]) { fill: none; }
.bl { fill: #83bdec; stroke: #0f6cbd; stroke-width: 3; }
.gy { fill: #c8c6c4; stroke: #797775; stroke-width: 3; }
.pen { fill: #fff; stroke: #2b88d8; stroke-width: 3; }

.titlebar { height: 34px; flex: none; background: #3b3a39; color: #fff; display: flex; align-items: center; }
.tb-icons { width: 80px; height: 20px; margin-left: 16px; }
.doc-name { width: 308px; margin-left: 6px; padding-top: 5px; white-space: nowrap; letter-spacing: -0.025em; }
.doc-name small { font-size: 9px; line-height: 1; vertical-align: 1px; }
.doc-caret { border: 5px solid transparent; border-top-color: #fff; border-bottom: 0; margin-left: 5px; width: 10px; }
.search { margin-left: 118px; width: 400px; height: 24px; background: #d2d2d0; border-radius: 2px; display: flex; align-items: center; color: #2e5a50; font-size: 13.5px; }
.search svg { margin-left: 17px; }
.search span { margin-left: 10px; }
.account { margin-left: 90px; width: 157px; white-space: nowrap; letter-spacing: -0.034em; }
.avatar { width: 20px; height: 20px; margin-left: 9px; }
.winbtns { width: 100px; height: 20px; margin-left: 32px; }

.menu { height: 35px; flex: none; background: #fafafa; display: flex; justify-content: space-between; }
.tabs { display: grid; grid-template-columns: 58px 69px 67px 90px 61px 88px 60px; padding-left: 23px; font-size: 13.5px; line-height: 32px; }
.tabs .on { font-weight: 600; justify-self: start; border-bottom: 3px solid #117865; height: 31px; width: 38px; letter-spacing: -0.03em; }
.share { margin: 4px 6px 0 0; width: 84px; height: 24px; border: 0; border-radius: 4px; background: #117865; color: #fff; font: inherit; font-weight: 600; font-size: 11.800px; letter-spacing: -0.05em; display: flex; align-items: center; gap: 8px; padding: 0 8px 0 7px; }
.share svg:last-child { margin-left: -3px; }

.ribbon { height: 91px; flex: none; background: #fafafa; display: flex; padding-top: 1px; box-shadow: 0 1px 3px rgba(0,0,0,.22); position: relative; z-index: 2; }
.group { height: 88px; border-right: 1px solid #d2d0ce; display: flex; flex-direction: column; justify-content: space-between; }
.glabel { text-align: center; font-size: 9.8px; line-height: 9px; letter-spacing: -0.01em; }
.btns { display: flex; }
.rb { text-align: center; line-height: 16px; white-space: nowrap; font-size: 12px; letter-spacing: -0.035em; display: flex; flex-direction: column; align-items: center; }
.rb svg { width: 32px; height: 32px; margin: 6px 0 2px; }
.cv { display: inline-block; width: 4px; height: 4px; border: solid #3b3a39; border-width: 0 1.4px 1.4px 0; transform: rotate(45deg); margin: 0 2px 3px 4px; }
.off { color: #c0bebc; }
.off .cv { border-color: #b0aeac; }
.g-clip { width: 161px; }
.clip-row { display: flex; color: #c0bebc; }
.paste { width: 28px; margin-left: 14px; display: flex; flex-direction: column; align-items: center; line-height: 16px; letter-spacing: -0.04em; }
.paste svg { width: 32px; height: 32px; margin: 6px 0 2px; }
.clip-list { margin: 0 0 0 10px; }
.clip-list div { display: flex; align-items: center; gap: 4px; height: 24px; white-space: nowrap; letter-spacing: -0.035em; }
.clip-list svg { width: 16px; height: 16px; }
.g-data { width: 370px; }
.g-data .btns { padding-left: 5px; display: grid; grid-template-columns: 46px 53px 66px 38px 42px 55px 56px; }
.g-query { width: 117px; }
.g-query .btns { padding-left: 9px; display: grid; grid-template-columns: 56px 44px; }
.g-insert { width: 147px; }
.g-insert .btns { padding-left: 8px; display: grid; grid-template-columns: 40px 40px 50px; }
.g-calc { width: 115px; }
.g-calc .btns { padding-left: 8px; display: grid; grid-template-columns: 50px 48px; }
.g-sens { width: 74px; }
.g-share { width: 60px; }
.g-cop { width: 59px; }
.g-sens .btns, .g-share .btns, .g-cop .btns { justify-content: center; }
.collapse { margin: 78px 0 0 249px; }

.work { flex: 1; display: flex; min-height: 0; }
.rail { width: 41px; background: #f3f2f1; border-right: 1px solid #e1dfdd; flex: none; }
.rail div { height: 40px; display: flex; align-items: center; justify-content: center; padding-left: 2px; }
.rail .on { border-left: 3px solid #117865; padding: 0 1px 0 0; }
.rail svg { width: 18px; height: 18px; }
.r1 { fill: none; }
.r1:not([stroke]) { stroke: #6b6967; }
.center { width: 1109px; display: flex; flex-direction: column; flex: none; }
.upper { height: 508px; display: flex; }
.stage { width: 1076px; padding: 8px 0 0 216px; background: #fff; }
.page { width: 644px; height: 364px; border: 2px dotted #5a5a5a; position: relative; }
.visual { position: absolute; background: #fff; border: 1px solid #6e6e6e; box-shadow: 4px 4px 5px rgba(0,0,0,.36); }
.visual h3 { font-size: 8.200px; line-height: 10px; font-style: italic; font-weight: 700; text-decoration: underline; color: #e66c37; letter-spacing: -0.012em; white-space: nowrap; padding-left: 2px; }
.v-title { left: 17px; top: 14px; width: 604px; height: 32px; padding-left: 2px; font-size: 13.200px; line-height: 24px; font-weight: 700; color: #e66c37; text-decoration: underline; text-decoration-color: #f0a080; white-space: nowrap; letter-spacing: -0.033em; }
.v-weather { left: 17px; top: 62px; width: 144px; height: 88px; }
.v-health { left: 173px; top: 62px; width: 271px; height: 88px; }
.v-overall { left: 450px; top: 62px; width: 178px; height: 88px; }
.tbl { width: 100px; margin-left: 3px; font-size: 6.500px; letter-spacing: -0.02em; color: #605e5c; line-height: 10px; padding-top: 1px; }
.tbl div { display: grid; grid-template-columns: 64.500px 1fr; column-gap: 5px; height: 10px; white-space: nowrap; }
.tbl span:first-child { text-align: right; }
.tbl span { position: relative; }
.tbl .th { height: 15px; border-bottom: 1px solid #b5d9f3; line-height: 11px; }
.tbl div:nth-child(odd):not(.th, .sum) { background: #ececec; }
.tbl .sum { font-weight: 700; color: #252423; }
.up, .down { position: absolute; left: 0; bottom: 1px; border: 2.500px solid transparent; }
.up { border-bottom-color: #252423; border-top: 0; }
.down { border-top-color: #252423; border-bottom: 0; left: 3px; }
.v-overall .tbl { width: 108px; }
.v-overall .tbl div { grid-template-columns: 60.500px 1fr; }
.scroll { position: absolute; right: 2px; top: 12px; width: 3px; height: 72px; border-radius: 2px; background: #a8a8a8; }
.funnel { font-size: 6.500px; color: #605e5c; padding-left: 2px; letter-spacing: -0.01em; }
.cap { margin-left: 45.500px; width: 218px; text-align: center; height: 9.500px; line-height: 13px; color: #777; }
.scale { height: 4px; margin: 1px auto 2px 45.500px; border: solid #c8c6c4; border-width: 0 1px; background: linear-gradient(#c8c6c4, #c8c6c4) center / 100% 1px no-repeat; }
.scale.low { margin: 1px 0 0 132.500px; }
.scale.low + .cap { line-height: 10px; }
.f { display: flex; height: 8.700px; align-items: center; }
.f b { width: 45.500px; line-height: 8px; color: #484644; font-weight: 600; }
.f span { width: 218px; height: 8px; display: flex; justify-content: center; }
.f i { background: #e66c37; height: 7.800px; flex: none; }
.f em { font-style: normal; width: 0; line-height: 9px; text-indent: 4px; }
.h-top, .h-all { position: absolute; font-size: 12.500px; line-height: 16px; font-style: italic; font-weight: 600; text-decoration: underline; white-space: nowrap; letter-spacing: -0.007em; }
.h-top { left: 19px; top: 154px; }
.h-all { left: 233px; top: 159px; }
.v-crime { left: 17px; top: 180px; width: 204px; height: 180px; border-bottom: 0; box-shadow: 4px 0 5px rgba(0,0,0,.36); clip-path: inset(-2px -12px 0 -2px); }
.v-crime p { font-size: 6.600px; line-height: 12px; color: #4a7080; padding-left: 2px; border-bottom: 1px solid #999; height: 14px; white-space: nowrap; letter-spacing: -0.012em; padding-top: 1px; }
.map1 { width: 198px; height: 154px; margin: 1px 0 0 2px; overflow: hidden; }
.v-all { left: 230px; top: 180px; width: 394px; border: 0; box-shadow: none; background: none; }
.v-all h3 { padding-left: 1px; height: 12px; }
.map2 { width: 394px; height: 165px; overflow: hidden; }
.lb { font-family: "Noto Sans", sans-serif; letter-spacing: 0; font-weight: 500; }
.esri { fill: #fff; stroke: #b8bcbd; stroke-width: 3; paint-order: stroke; font-weight: 700; letter-spacing: 0; }
.pw { stroke-width: 1; }

.filters, .datap { display: flex; flex-direction: column; align-items: center; }
.filters { width: 33px; border-left: 1px solid #b3b0ad; background: #fff; padding-top: 12px; }
.chev { fill: none; stroke: #3b3a39; stroke-width: 1.100; }
.fun { margin: 16px 0 0 3px; fill: none; stroke: #252423; stroke-width: 1.200; }
.filters span, .datap span { writing-mode: vertical-rl; font-weight: 600; font-size: 14.500px; line-height: 18px; letter-spacing: -0.01em; }
.filters span { margin-top: 7px; }
.pagetabs { height: 35px; background: #f3f2f1; display: flex; align-items: flex-start; flex: none; }
.dev { padding-top: 7px; display: flex; justify-content: center; width: 24px; margin-left: 10px; height: 31px; }
.dev.on { border-bottom: 3px solid #117865; }
.dev.ph { padding-top: 5px; margin-left: 20px; }
.pl, .pr { border: 4px solid transparent; margin-top: 14px; }
.pl { border-right: 5px solid #c8c6c4; border-left: 0; margin-left: 15px; }
.pr { border-left: 5px solid #c8c6c4; border-right: 0; margin-left: 18px; }
.ptab { margin-left: 6px; width: 77px; height: 35px; border: solid #a19f9d; border-width: 0 1px; border-bottom: 4px solid #117865; background: #fff; text-align: center; line-height: 37px; font-weight: 600; letter-spacing: -0.04em; }
.padd { width: 39px; height: 35px; background: #117865; display: flex; align-items: center; justify-content: center; }

.viz { width: 182px; flex: none; background: #f3f2f1; border: solid #d8d6d4; border-width: 0 1px; }
.vhead { display: flex; justify-content: space-between; align-items: center; padding: 0 8px; height: 38px; }
.vhead h1 { font-size: 15.500px; font-weight: 600; letter-spacing: -0.02em; }
.vsub { padding-left: 8px; font-weight: 600; line-height: 16px; letter-spacing: -0.03em; }
.vtabs { display: flex; gap: 33px; padding: 3px 8px 0; }
.vt { width: 32px; height: 32px; border-radius: 2px; display: flex; align-items: center; justify-content: center; }
.vt.on { background: #d2d0ce; }
.vline { width: 180px; height: 9px; margin-top: 4px; }
.icons { display: grid; grid-template-columns: repeat(6, 18px); gap: 10px; padding: 11px 0 0 11px; }
.icons svg { width: 18px; height: 18px; }
.num { font-size: 25px; font-weight: 400; fill: #1f78c8; letter-spacing: 0; }
.ltr { font-size: 47px; font-weight: 700; fill: #2b88c8; letter-spacing: 0; }
.more { padding-left: 11px; font-size: 16px; letter-spacing: 2.500px; line-height: 24px; height: 38px; border-bottom: 1px solid #d8d6d4; }
.wells { padding: 9px 6px 0 4px; }
.lab { padding-left: 8px; line-height: 16px; letter-spacing: -0.02em; }
.well { margin-top: 5px; height: 28px; border: 1px dashed #c8c6c4; background: #fff; border-radius: 2px; line-height: 27px; padding-left: 10px; letter-spacing: -0.018em; white-space: nowrap; }
.drill { margin-top: 11px; font-weight: 600; color: #484644; letter-spacing: -0.03em; }
.tog { display: flex; justify-content: space-between; align-items: center; height: 27px; padding: 0 16px 0 8px; }
.drill + .tog { margin-top: 3px; }
.tog em { width: 32px; height: 16px; border-radius: 8px; background: #117865; color: #fff; font-style: normal; font-size: 9px; font-weight: 700; display: flex; align-items: center; justify-content: space-between; padding: 0 4px 0 5px; }
.tog em i { width: 8px; height: 8px; border-radius: 50%; background: #fff; }
.well.w2 { padding-left: 8px; letter-spacing: -0.025em; margin-top: 4px; height: 27px; }
.datap { width: 34px; background: #f3f2f1; padding-top: 12px; }
.datap span { margin: 12px 3px 0 0; }

.status { height: 25px; flex: none; background: #f3f2f1; border-top: 1px solid #d8d6d4; border-bottom: 1px solid #000; display: flex; align-items: center; color: #484644; }
.pg { width: 1154px; padding: 3px 0 0 4px; }
.zoombar { width: 124px; height: 14px; }
.pct { margin: 0 18px 0 12px; color: #605e5c; width: 23px; letter-spacing: -0.04em; }
.taskbar { height: 40px; flex: none; background: linear-gradient(90deg, #22383f, #21363f 40%, #1f3143 65%, #1b2740); display: flex; color: #fff; }
.start { width: 48px; display: flex; align-items: center; justify-content: center; }
.tsearch { width: 288px; background: #f2f2f2; border: 1px solid #bbb; border-bottom: 1px solid #ccc; color: #2b2b2b; display: flex; align-items: center; font-size: 14.500px; letter-spacing: -0.02em; }
.tsearch > svg:first-child { margin-left: 11px; }
.tsearch span { margin-left: 11px; width: 171px; white-space: nowrap; }
.koala { width: 60px; height: 38px; overflow: hidden; }
.apps { display: flex; gap: 1px; }
.apps svg { width: 48px; height: 40px; overflow: hidden; }
.apps .tv { margin-right: 2px; }
.act { background: #4d5b64; }
.u { fill: #76b9ed; }
.tray { margin-left: auto; display: flex; align-items: center; }
.temp { font-size: 14px; margin-left: 8px; width: 38px; letter-spacing: -0.035em; }
.wx { font-size: 14px; width: 109px; letter-spacing: -0.02em; white-space: nowrap; }
.sys { width: 88px; height: 20px; }
.clock { width: 60px; margin: 0 14px 0 4px; text-align: center; line-height: 18px; font-size: 12px; letter-spacing: -0.03em; }
.peek { width: 1px; height: 40px; background: #5b6676; margin: 0 4px 0 20px; }
```
